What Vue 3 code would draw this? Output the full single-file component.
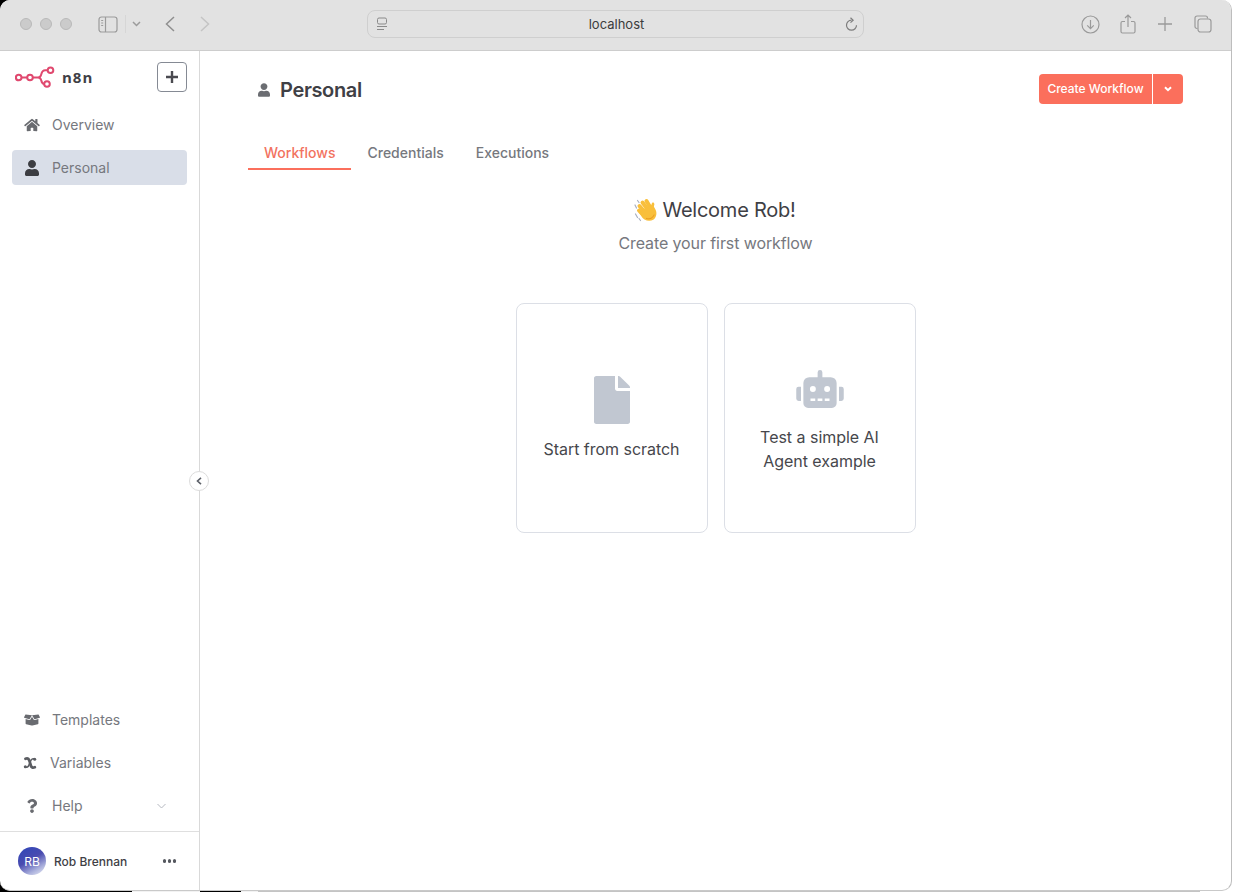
<script setup>
const icons = {
  home: { box: '0 0 576 512', d: 'M280.37 148.26L96 300.11V464a16 16 0 0 0 16 16l112.06-.29a16 16 0 0 0 15.92-16V368a16 16 0 0 1 16-16h64a16 16 0 0 1 16 16v95.64a16 16 0 0 0 16 16.05L464 480a16 16 0 0 0 16-16V300L295.67 148.26a12.19 12.19 0 0 0-15.3 0zM571.6 251.47L488 182.56V44.05a12 12 0 0 0-12-12h-56a12 12 0 0 0-12 12v72.61L318.47 43a48 48 0 0 0-61 0L4.34 251.47a12 12 0 0 0-1.6 16.9l25.5 31A12 12 0 0 0 45.15 301l235.22-193.74a12.19 12.19 0 0 1 15.3 0L530.9 301a12 12 0 0 0 16.9-1.6l25.5-31a12 12 0 0 0-1.7-16.93z' },
  user: { box: '0 0 448 512', d: 'M224 256c70.7 0 128-57.3 128-128S294.7 0 224 0 96 57.3 96 128s57.3 128 128 128zm89.6 32h-16.7c-22.2 10.2-46.9 16-72.9 16s-50.6-5.8-72.9-16h-16.7C60.2 288 0 348.2 0 422.4V464c0 26.5 21.5 48 48 48h352c26.5 0 48-21.5 48-48v-41.6c0-74.2-60.2-134.4-134.4-134.4z' },
  box: { box: '0 0 640 512', d: 'M425.7 256c-16.9 0-32.8-9-41.4-23.4L320 126l-64.2 106.6c-8.7 14.5-24.6 23.5-41.5 23.5-4.5 0-9-.6-13.3-1.9L64 215v178c0 14.7 10 27.5 24.2 31l216.2 54.1c10.2 2.5 20.9 2.5 31 0L551.8 424c14.2-3.6 24.2-16.4 24.2-31V215l-137 39.1c-4.3 1.3-8.8 1.9-13.3 1.9zm212.6-112.2L586.8 41c-3.1-6.2-9.8-9.8-16.7-8.9L320 64l91.7 152.1c3.8 6.3 11.4 9.3 18.5 7.3l197.9-56.5c9.9-2.9 14.7-13.9 10.2-23.1zM53.2 41L1.7 143.8c-4.6 9.2.3 20.2 10.1 23l197.9 56.5c7.1 2 14.7-1 18.5-7.3L320 64 69.8 32.1c-6.9-.8-13.5 2.7-16.6 8.9z' },
  question: { box: '0 0 384 512', d: 'M202.021 0C122.202 0 70.503 32.703 29.914 91.026c-7.363 10.58-5.093 25.086 5.178 32.874l43.138 32.709c10.373 7.865 25.132 6.026 33.253-4.148 25.049-31.381 43.63-49.449 82.757-49.449 30.764 0 68.816 19.799 68.816 49.631 0 22.552-18.617 34.134-48.993 51.164-35.423 19.86-82.299 44.576-82.299 106.405V320c0 13.255 10.745 24 24 24h72.471c13.255 0 24-10.745 24-24v-5.773c0-42.86 125.268-44.645 125.268-160.627C377.504 66.256 286.902 0 202.021 0zM192 373.459c-38.196 0-69.271 31.075-69.271 69.271 0 38.195 31.075 69.27 69.271 69.27s69.271-31.075 69.271-69.271-31.075-69.27-69.271-69.27z' },
  file: { box: '0 0 384 512', d: 'M224 136V0H24C10.7 0 0 10.7 0 24v464c0 13.3 10.7 24 24 24h336c13.3 0 24-10.7 24-24V160H248c-13.2 0-24-10.8-24-24zm160-14.1v6.1H256V0h6.1c6.4 0 12.5 2.5 17 7l97.9 98c4.5 4.5 7 10.6 7 16.9z' },
  robot: { box: '0 0 640 512', d: 'M32,224H64V416H32A31.96166,31.96166,0,0,1,0,384V256A31.96166,31.96166,0,0,1,32,224Zm512-48V448a64.06328,64.06328,0,0,1-64,64H160a64.06328,64.06328,0,0,1-64-64V176a79.974,79.974,0,0,1,80-80H288V32a32,32,0,0,1,64,0V96H464A79.974,79.974,0,0,1,544,176ZM264,256a40,40,0,1,0-40,40A39.997,39.997,0,0,0,264,256Zm-8,128H192v32h64Zm96,0H288v32h64ZM456,256a40,40,0,1,0-40,40A39.997,39.997,0,0,0,456,256Zm-8,128H384v32h64ZM640,256V384a31.96166,31.96166,0,0,1-32,32H576V224h32A31.96166,31.96166,0,0,1,640,256Z' },
}

const tabs = ['Workflows', 'Credentials', 'Executions']
</script>

<template>
  <div class="desktop">
    <div class="window">
      <header class="toolbar">
        <div class="lights"><i></i><i></i><i></i></div>
        <svg class="tb-sidebar" width="20" height="17" viewBox="0 0 20 17" fill="none" stroke="#9b9b9b" stroke-width="1.2">
          <rect x="1" y="1" width="18" height="15" rx="2.5" />
          <path d="M7.5 1v15" />
          <path d="M3.2 4.5h2M3.2 7h2M3.2 9.5h2" stroke-width="1" />
        </svg>
        <span class="tb-sep"></span>
        <svg class="tb-drop" width="9" height="6" viewBox="0 0 9 6" fill="none" stroke="#9b9b9b" stroke-width="1.5"><path d="M1 1l3.5 3.5L8 1" /></svg>
        <svg class="tb-back" width="10" height="16" viewBox="0 0 10 16" fill="none" stroke="#8f8f8f" stroke-width="1.5"><path d="M9 1L1.5 8 9 15" /></svg>
        <svg class="tb-fwd" width="10" height="16" viewBox="0 0 10 16" fill="none" stroke="#c4c4c4" stroke-width="1.5"><path d="M1 1l7.5 7L1 15" /></svg>
        <div class="url">
          <svg width="12" height="14" viewBox="0 0 12 14" fill="none" stroke="#8a8a8a" stroke-width="1">
            <rect x="1.5" y="1" width="9" height="6" rx="1.5" />
            <path d="M1 9.5h10M1 12.5h7" />
          </svg>
          <span class="url-text">localhost</span>
          <svg width="13" height="15" viewBox="0 0 13 15" fill="none" stroke="#7d7d7d" stroke-width="1.2">
            <path d="M6.5 3.2a5 5 0 1 0 5 5" />
            <path d="M5.5 .8l2.6 2.4-2.6 2.4" />
          </svg>
        </div>
        <div class="tb-right">
          <svg width="19" height="19" viewBox="0 0 19 19" fill="none" stroke="#9a9a9a" stroke-width="1.2">
            <circle cx="9.5" cy="9.5" r="8.5" />
            <path d="M9.5 5v8.5M6.2 10.4l3.3 3.2 3.3-3.2" />
          </svg>
          <svg width="16" height="20" viewBox="0 0 16 20" fill="none" stroke="#9a9a9a" stroke-width="1.2">
            <path d="M5 7.5H2.5A1.5 1.5 0 0 0 1 9v8.5A1.5 1.5 0 0 0 2.5 19h11a1.5 1.5 0 0 0 1.5-1.5V9a1.5 1.5 0 0 0-1.5-1.5H11" />
            <path d="M8 13V1.2M5 4l3-3 3 3" />
          </svg>
          <svg class="tb-wide" width="14" height="14" viewBox="0 0 14 14" fill="none" stroke="#9a9a9a" stroke-width="1.3"><path d="M7 0v14M0 7h14" /></svg>
          <svg class="tb-wide" width="18" height="18" viewBox="0 0 18 18" fill="none" stroke="#9a9a9a" stroke-width="1.2">
            <path d="M3.5 13.500H3A2 2 0 0 1 1 11.500V3a2 2 0 0 1 2-2h8.500a2 2 0 0 1 2 2v.5" />
            <rect x="4" y="4" width="13" height="13" rx="2.5" />
          </svg>
        </div>
      </header>

      <div class="body">
        <aside class="sidebar">
          <div class="brand">
            <svg class="logo" width="40" height="22" viewBox="0 0 40 22" fill="none" stroke="#e0496f" stroke-width="2">
              <circle cx="3.700" cy="11.500" r="2.800" />
              <circle cx="15" cy="11.500" r="2.800" />
              <circle cx="35.500" cy="4.300" r="2.800" />
              <circle cx="32" cy="18" r="2.800" />
              <path d="M6.500 11.500h5.700M17.800 11.500h5.200c2.500 0 2.800-1.500 3.200-3 .6-2.400 1.800-4.200 4-4.200h2.500M23 11.500c2.500 0 2.800 1.200 3.200 2.800.5 2.300 1.400 3.700 3 3.700" />
            </svg>
            <span class="brand-name">n8n</span>
            <button class="add">
              <svg width="12" height="12" viewBox="0 0 12 12" fill="none" stroke="#4a4a50" stroke-width="2.400"><path d="M6 0v12M0 6h12" /></svg>
            </button>
          </div>
          <nav class="nav">
            <a class="nav-item">
              <svg class="nav-icon" viewBox="0 0 576 512" fill="currentColor"><path :d="icons.home.d" /></svg>
              Overview
            </a>
            <a class="nav-item active">
              <svg class="nav-icon dark" viewBox="0 0 448 512" fill="currentColor"><path :d="icons.user.d" /></svg>
              Personal
            </a>
          </nav>
          <nav class="nav bottom">
            <a class="nav-item">
              <svg class="nav-icon" viewBox="0 0 640 512" fill="currentColor"><path :d="icons.box.d" /></svg>
              Templates
            </a>
            <a class="nav-item variables">
              <svg class="nav-icon var" viewBox="0 0 14 14" fill="none" stroke="currentColor" stroke-linecap="round">
                <path d="M2.500 2.800C5 1.800 6 3 6.800 6l1 3.500c.6 2 2 2.500 4 1.700" stroke-width="2.800" />
                <path d="M11.500 3C9.500 2 8 3.500 7 6.500S5 12 2.500 11" stroke-width="1.600" />
                <circle cx="11.700" cy="3.200" r="1.500" fill="currentColor" stroke="none" />
                <circle cx="2.300" cy="10.800" r="1.500" fill="currentColor" stroke="none" />
              </svg>
              Variables
            </a>
            <a class="nav-item">
              <svg class="nav-icon" viewBox="0 0 384 512" fill="currentColor"><path :d="icons.question.d" /></svg>
              Help
              <svg class="help-chevron" width="9" height="6" viewBox="0 0 9 6" fill="none" stroke="#b5b8c0" stroke-width="1"><path d="M.5 1l4 4 4-4" /></svg>
            </a>
          </nav>
          <div class="account">
            <span class="avatar">RB</span>
            <span class="account-name">Rob Brennan</span>
            <span class="dots"><i></i><i></i><i></i></span>
          </div>
          <button class="collapse">
            <svg width="6" height="8" viewBox="0 0 6 8" fill="none" stroke="#5c6068" stroke-width="1.600"><path d="M5 .8L1.500 4 5 7.200" /></svg>
          </button>
        </aside>

        <main class="main">
          <div class="top">
            <h1 class="title">
              <svg class="title-icon" viewBox="0 0 448 512" fill="currentColor"><path :d="icons.user.d" /></svg>
              Personal
            </h1>
            <div class="create">
              <button class="create-btn">Create Workflow</button>
              <button class="create-drop">
                <svg width="8" height="6" viewBox="0 0 8 6" fill="none" stroke="#fff" stroke-width="2"><path d="M1 1.200l3 3 3-3" /></svg>
              </button>
            </div>
          </div>

          <div class="tabs">
            <a v-for="(tab, i) in tabs" :key="tab" class="tab" :class="{ current: i === 0 }">{{ tab }}</a>
          </div>

          <section class="welcome">
            <h2 class="hello">
              <svg class="wave" width="24" height="24" viewBox="0 0 24 24" fill="none" stroke-linecap="round">
                <path d="M2.500 10L1 7M5 4.500L3.500 2.500M1.500 16l2 3.500M5 20.500l1.500 2" stroke="#a9b0c0" stroke-width="1.200" />
                <g stroke="#f9bf3b" stroke-width="4">
                  <path d="M5.500 8l6.500 7.500" />
                  <path d="M8.500 4.500l6.500 8.500" />
                  <path d="M12.500 3l5 8.500" />
                  <path d="M5 12.500l5.500 6" />
                </g>
                <path d="M19 7c2 4 4.500 6.500 3 11-1.500 5-7.500 6-11.500 3.500-2.500-1.500-3-3.500-5-6.500L11 10l6-2z" fill="#f9bf3b" />
                <path d="M16.500 9l1.500-4c1.200-1 2.300-.2 2.300 1.200L19.500 11" fill="#f9bf3b" />
                <path d="M12.500 20.500c3 1 6.500-.3 7.500-3.500" stroke="#e8971e" stroke-width="1" />
              </svg>
              Welcome Rob!
            </h2>
            <p class="sub">Create your first workflow</p>
            <div class="cards">
              <button class="card">
                <svg class="card-file" viewBox="0 0 384 512" fill="currentColor"><path :d="icons.file.d" /></svg>
                <span>Start from scratch</span>
              </button>
              <button class="card agent">
                <svg class="card-robot" viewBox="0 0 640 512" fill="currentColor"><path :d="icons.robot.d" /></svg>
                <span class="ai">Test a simple AI Agent example</span>
              </button>
            </div>
          </section>
        </main>
      </div>
    </div>
  </div>
</template>

<style>
html, body { margin: 0; height: 100%; overflow: hidden; }
</style>

<style scoped>
.desktop {
  width: 1234px; height: 892px; overflow: hidden;
  font-family: Inter, "Liberation Sans", sans-serif;
  background:
    linear-gradient(90deg, #000 0 132px, #f2f2f2 132px 200px, #000 200px 241px, #f2f2f2 241px 258px, #c4c4c4 258px 1200px, #fff 1200px);
}
.window {
  width: 1232px; height: 891px; box-sizing: border-box;
  background: #fff; border-right: 1px solid #bdbdbd; border-bottom: 1px solid #c9c9c9;
  border-radius: 10px; overflow: hidden;
  display: flex; flex-direction: column;
}
button { font: inherit; cursor: pointer; padding: 0; }

.toolbar {
  height: 51px; flex: none; box-sizing: border-box;
  background: #e2e2e2; border-bottom: 1px solid #cdcdcd;
  display: flex; align-items: center; padding: 0 0 2px 20px;
}
.lights { display: flex; gap: 8px; }
.lights i {
  width: 12px; height: 12px; border-radius: 50%; box-sizing: border-box;
  background: #cbcbcb; border: 1px solid #b9b9b9;
}
.tb-sidebar { margin-left: 26px; }
.tb-sep { width: 1px; height: 18px; background: #d6d6d6; margin-left: 7px; }
.tb-drop { margin-left: 6px; }
.tb-back { margin-left: 24px; }
.tb-fwd { margin-left: 25px; }
.url {
  width: 497px; height: 28px; box-sizing: border-box; margin-left: 157px;
  border: 1px solid #cfcfcf; border-radius: 8px;
  display: flex; align-items: center; justify-content: space-between; padding: 0 5px 0 8px;
}
.url-text { font-size: 13px; color: #3c3c3c; }
.tb-right { display: flex; align-items: center; margin-left: 217px; gap: 20px; }
.tb-wide { margin-left: 2px; }

.body { flex: 1; display: flex; min-height: 0; }

.sidebar {
  position: relative; width: 200px; flex: none; box-sizing: border-box;
  border-right: 1px solid #d9d9d9; display: flex; flex-direction: column;
}
.brand { display: flex; align-items: center; height: 30px; margin-top: 11px; padding-left: 15px; }
.logo { margin-top: -1px; }
.brand-name { margin-left: 7px; font-size: 15px; font-weight: 700; color: #3f3f46; letter-spacing: 1px; font-family: "Open Sans", Inter, sans-serif; }
.add {
  margin-left: auto; margin-right: 12px; width: 30px; height: 30px; box-sizing: border-box;
  background: #fff; border: 1px solid #858a94; border-radius: 4px;
  display: flex; align-items: center; justify-content: center;
}
.nav { display: flex; flex-direction: column; gap: 8px; padding: 0 12px; margin-top: 15px; }
.nav.bottom { margin-top: auto; padding-bottom: 8px; border-bottom: 1px solid #dfdfdf; }
.nav-item {
  height: 35px; display: flex; align-items: center; box-sizing: border-box;
  padding-left: 40px; position: relative; border-radius: 4px;
  font-size: 14px; color: #76787e; width: 175px;
}
.nav-item.active { background: #d9dee8; }
.nav-item.variables { padding-left: 38px; }
.nav-icon {
  position: absolute; left: 12px; top: 50%; transform: translateY(-50%);
  width: 16px; height: 14px; color: #696b70;
}
.nav-icon.dark { color: #3c3d42; height: 16px; left: 12px; }
.nav-icon.var { color: #5b5d62; height: 14px; left: 11px; width: 14px; }
.help-chevron { margin-left: auto; margin-right: 21px; }

.account { height: 58px; flex: none; display: flex; align-items: center; padding: 0 23px 0 18px; }
.avatar {
  width: 28px; height: 28px; border-radius: 50%; flex: none;
  background: linear-gradient(150deg, #2d46b9 0%, #4a4cb0 45%, #aab0dc 75%, #eef0f8 100%);
  color: #fff; font-size: 12px; display: flex; align-items: center; justify-content: center;
}
.account-name { margin-left: 8px; font-size: 12px; font-weight: 500; color: #3f3f46; }
.dots { margin-left: auto; display: flex; gap: 1.500px; }
.dots i { width: 3.500px; height: 3.500px; border-radius: 50%; background: #55585f; }
.collapse {
  position: absolute; right: -10px; top: 420px; width: 20px; height: 20px; z-index: 2;
  border-radius: 50%; background: #fff; border: 1px solid #dcdcdc;
  display: flex; align-items: center; justify-content: center;
}

.main { flex: 1; min-width: 0; display: flex; flex-direction: column; padding: 23px 48px 0; }
.top { display: flex; align-items: flex-start; justify-content: space-between; }
.title {
  margin: 0; display: flex; align-items: center; height: 32px; padding-left: 10px;
  font-size: 20px; font-weight: 600; color: #3f4045; letter-spacing: -.35px;
}
.title-icon { width: 12px; height: 14px; margin-right: 10px; color: #6b6d72; }
.create { display: flex; height: 30px; gap: 1px; }
.create-btn, .create-drop { border: 0; background: #fb6f5c; color: #fff; font-size: 12px; font-weight: 500; }
.create-btn { width: 113px; border-radius: 4px 0 0 4px; padding-bottom: 2px; }
.create-drop {
  width: 30px; border-radius: 0 4px 4px 0;
  display: flex; align-items: center; justify-content: center;
}

.tabs { display: flex; margin-top: 24px; }
.tab {
  padding: 14px 16px 0; height: 40px; box-sizing: border-box; line-height: 18px;
  font-size: 14px; font-weight: 500; color: #76787e; border-bottom: 2px solid transparent;
}
.tab.current { color: #f2735f; border-bottom-color: #fb6f5c; }

.welcome { display: flex; flex-direction: column; align-items: center; }
.hello {
  margin: 27px 0 0; padding-right: 2px; display: flex; align-items: center; gap: 5px;
  font-size: 20px; font-weight: 400; line-height: 26px; color: #3f4045; letter-spacing: -.25px;
}
.wave { margin-top: -1px; }
.sub { margin: 10px 0 0; font-size: 16px; line-height: 20px; color: #76787e; letter-spacing: -.1px; }
.cards { display: flex; gap: 16px; margin-top: 50px; }
.card {
  width: 192px; height: 230px; box-sizing: border-box;
  background: #fff; border: 1px solid #dcdfe6; border-radius: 8px;
  display: flex; flex-direction: column; align-items: center; justify-content: center;
  font-size: 16px; line-height: 24px; color: #46474c; font-weight: 400; letter-spacing: -.03px;
}
.card.agent { padding-top: 6px; }
.card-file { width: 36px; height: 48px; color: #c1c7d1; margin-bottom: 13px; }
.card-robot { width: 48px; height: 38px; color: #c1c7d1; margin-bottom: 17px; }
.ai { width: 130px; text-align: center; }
</style>
